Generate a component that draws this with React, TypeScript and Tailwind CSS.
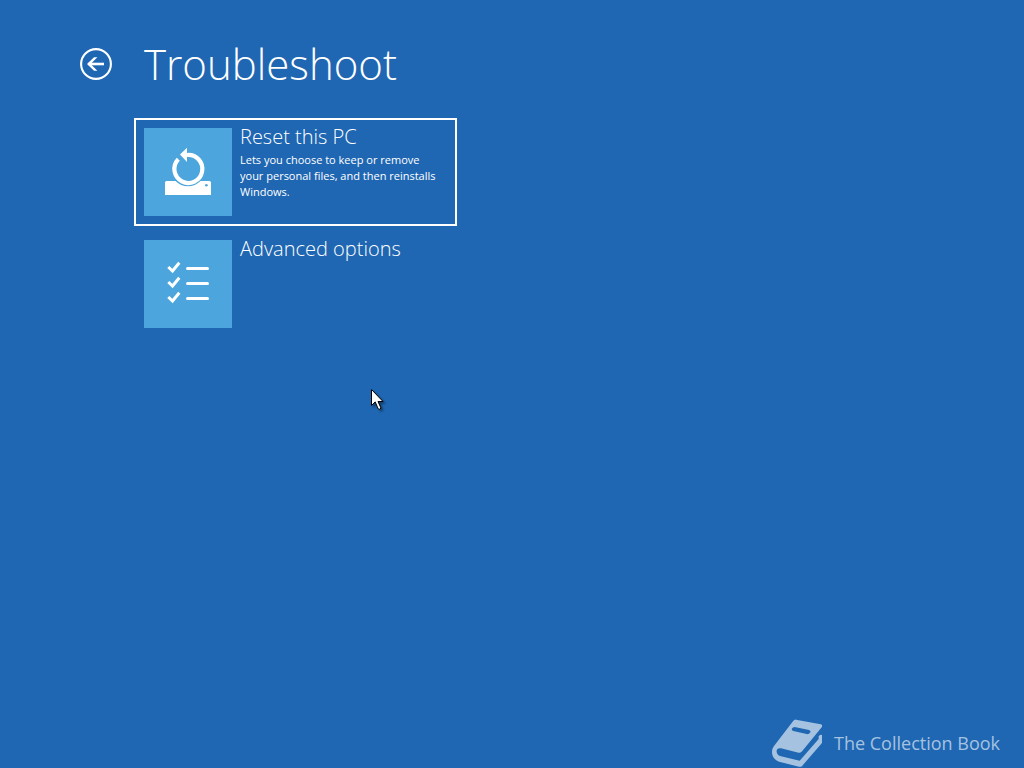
import type { ReactNode } from 'react';

interface OptionCardProps {
  title: string;
  description?: string;
  icon: ReactNode;
  selected?: boolean;
}

function BackIcon() {
  return (
    <svg viewBox="0 0 32 32" className="size-8" fill="none" stroke="currentColor" aria-hidden="true">
      <circle cx="16" cy="16" r="14.9" strokeWidth="2.1" />
      <path d="M8.5 16H24" strokeWidth="2.6" />
      <path d="M17.4 9.2H14L7 16l7 6.8h3.4L10.6 16z" fill="currentColor" stroke="none" />
    </svg>
  );
}

function ResetIcon() {
  return (
    <svg viewBox="0 0 88 88" className="size-22" aria-hidden="true">
      <path
        d="M22.5 53H31.500a17.500 17.500 0 0 0 25 0h9a1.500 1.500 0 0 1 1.500 1.500V67H21V54.500a1.500 1.500 0 0 1 1.500-1.500z"
        fill="#fff"
      />
      <circle cx="62.400" cy="57.300" r="1.300" fill="#4ca6dd" />
      <path d="M43 27a14 14 0 1 1-8.700 4.200" fill="none" stroke="#fff" strokeWidth="4.200" />
      <path d="M36 26.600 43 19.700V34z" fill="#fff" />
    </svg>
  );
}

function ChecklistIcon() {
  return (
    <svg viewBox="0 0 88 88" className="size-22" fill="none" stroke="#fff" aria-hidden="true">
      {[28.5, 43.5, 58.5].map((y) => (
        <g key={y}>
          <path d={`M24.300 ${y - 1.5}l4.200 4 6.800-8.300`} strokeWidth="3" />
          <path d={`M43.500 ${y}h20`} strokeWidth="3" strokeLinecap="round" />
        </g>
      ))}
    </svg>
  );
}

function BookIcon() {
  return (
    <svg viewBox="30 36 150 140" className="h-12 w-[50px]" fill="currentColor" aria-hidden="true">
      <path
        fillRule="evenodd"
        d="M102 36 176 50q8 2 3 9l-60 73q-4 4-9 3l-53-13c-9-2-14 3-13 11 1 7 5 11 13 13l56 13 57-65V86q5-8 11-3v18q0 4-3 7l-57 66q-4 5-10 3l-60-15C35 154 30 145 30 132q0-9 6-17l57-74q4-6 9-5zM98 58q-8 1-9 6 0 5 5 6l40 9q8 2 11-5 2-5-4-7z"
      />
    </svg>
  );
}

function OptionCard({ title, description, icon, selected = false }: OptionCardProps) {
  return (
    <button
      type="button"
      className={`flex w-full items-start gap-2 border-2 p-2 text-left ${
        selected ? 'border-white' : 'border-transparent'
      }`}
    >
      <span className="shrink-0 bg-[#4ca6dd]">{icon}</span>
      <span className="min-w-0 flex-1 pr-2">
        <span className="block text-[20px] leading-[18px] font-light">{title}</span>
        {description && <span className="mt-1.5 block text-[11px] leading-4">{description}</span>}
      </span>
    </button>
  );
}

export default function App() {
  return (
    <div className="flex min-h-screen flex-col bg-[#1f67b2] font-['Open_Sans','Noto_Sans',sans-serif] text-white">
      <header className="flex items-center gap-8 px-20 pt-8">
        <button type="button" aria-label="Back">
          <BackIcon />
        </button>
        <h1 className="text-[42px] leading-16 font-light">Troubleshoot</h1>
      </header>

      <main className="mt-[22px] ml-[134px] flex w-full max-w-[323px] flex-col gap-1">
        <OptionCard
          title="Reset this PC"
          description="Lets you choose to keep or remove your personal files, and then reinstalls Windows."
          icon={<ResetIcon />}
          selected
        />
        <OptionCard title="Advanced options" icon={<ChecklistIcon />} />
      </main>

      <footer className="mt-auto flex items-center justify-end gap-3 pr-6 pb-px text-[#a5c2e1]">
        <BookIcon />
        <span className="text-[18px] leading-6">The Collection Book</span>
      </footer>

      {/* Mouse pointer */}
      <svg
        viewBox="0 0 14 22"
        className="pointer-events-none absolute top-[389px] left-[371px] h-[22px] w-[14px] drop-shadow-[2px_2px_1px_rgba(0,0,0,0.4)]"
        aria-hidden="true"
      >
        <path
          d="M.5.5v16l3.700-3.600 3 7q1.500 1 2.800-.8l-3-6.600h5z"
          fill="#fff"
          stroke="#000"
        />
      </svg>
    </div>
  );
}
